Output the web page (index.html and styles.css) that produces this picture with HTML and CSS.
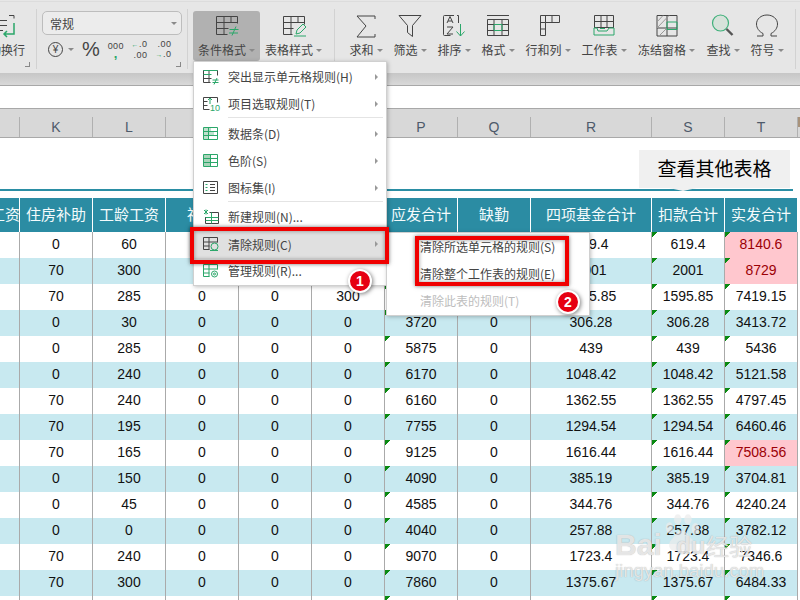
FILE: index.html
```html
<!DOCTYPE html>
<html lang="zh">
<head>
<meta charset="utf-8">
<title>条件格式</title>
<link rel="stylesheet" href="styles.css">
</head>
<body>
<div class="page">
  <header class="ribbon">
    <section class="group group-wrap">
      <div class="rbtn wrapbtn">
        <svg class="ico" viewBox="0 0 24 24"><path class="k" d="M-4 6.500H6M-4 11.500H6M-4 16.500H2"/><path class="k" d="M8 1.500h5v3"/><path class="g2" d="M13 9v11H3M6 17l-3 3 3 3"/></svg>
        <span class="lbl">自动换行</span>
      </div>
      <i class="launcher"></i>
    </section>
    <section class="group group-num">
      <div class="combo"><span>常规</span><i class="tri"></i></div>
      <div class="numrow">
        <span class="yen">¥</span><i class="tri yentri"></i>
        <span class="pct">%</span>
        <span class="thou">000<b>,</b></span>
        <span class="dec"><em><u>←</u>.0</em><em>.00</em></span>
        <span class="dec"><em>.00</em><em><u>→</u>.0</em></span>
      </div>
      <i class="launcher"></i>
    </section>
    <section class="group group-style">
      <div class="rbtn wide active">
        <svg class="ico" viewBox="0 0 24 24"><path class="k" d="M1.500 2.500h21v7M1.500 2.500v18h11M1.500 8.500h21M1.500 14.500h12M9 2.500v18M16 2.500v6"/><path class="g" d="M14.500 15.500h9M14 19h9M21 12.500l-4 9"/></svg>
        <span class="lbl">条件格式<i class="tri"></i></span>
      </div>
      <div class="rbtn wide">
        <svg class="ico" viewBox="0 0 24 24"><path class="k" d="M1.500 2.500h21v8M1.500 2.500v18h9M1.500 8.500h21M1.500 14.500h10M9 2.500v18M16 2.500v6"/><path class="g" d="M12 22h12M14 20l1-4 6-6 3 3-6 6z"/></svg>
        <span class="lbl">表格样式<i class="tri"></i></span>
      </div>
    </section>
    <section class="group group-tools">
      <div class="rbtn">
        <svg class="ico" viewBox="0 0 24 24"><path class="k" d="M21 5V2H3l9 10-9 11h18v-3"/></svg>
        <span class="lbl">求和<i class="tri"></i></span>
      </div>
      <div class="rbtn">
        <svg class="ico" viewBox="0 0 24 24"><path class="k" d="M1 1.500h22l-8.500 10v11l-5-4v-7z"/></svg>
        <span class="lbl">筛选<i class="tri"></i></span>
      </div>
      <div class="rbtn">
        <svg class="ico" viewBox="0 0 24 24"><path class="k" d="M12 1.500H2.500a1 1 0 0 0-1 1v18a1 1 0 0 0 1 1h6M15 1.500h1.500V9"/><path class="k" d="M5 9l3-6.500 3 6.500M6 7h4M5 13h6l-6 7h6"/><path class="g" d="M18.500 10v12M14.500 17.500l4 4.500 4-4.500"/></svg>
        <span class="lbl">排序<i class="tri"></i></span>
      </div>
      <div class="rbtn">
        <svg class="ico" viewBox="0 0 24 24"><path class="k" d="M1 1.500h22M1.500 5.500h21v16h-21zM1.500 10.500h21M1.500 16.500h21M8 5.500v16M16 5.500v16"/><path class="g" d="M8 10.500h8v6H8z"/></svg>
        <span class="lbl">格式<i class="tri"></i></span>
      </div>
      <div class="rbtn rbtn3">
        <svg class="ico" viewBox="0 0 24 24"><path class="k" d="M4.500 1.500h19v7h-14v13h-5zM4.500 8.500h5M4.500 15h5M9.500 1.500v7M16 1.500v7"/></svg>
        <span class="lbl">行和列<i class="tri"></i></span>
      </div>
      <div class="rbtn rbtn3">
        <svg class="ico" viewBox="0 0 24 24"><path class="k" d="M2.500 14V1.500h19V14M2.500 7.500h19M2.500 13.500h19M9 1.500v12M15 1.500v12"/><path class="g" d="M2 14v7h20v-7h-5l-2 3H6l-1-3zM8 14.500h5"/></svg>
        <span class="lbl">工作表<i class="tri"></i></span>
      </div>
      <div class="rbtn wide4">
        <svg class="ico" viewBox="0 0 24 24"><path class="k" d="M2 1.500h20v20.500H2zM2 14h20M12 1.500V22"/><path class="lt" d="M2 8l6-6.500M2 14L14 1.500M4 22l8-8"/><path class="g" d="M12 8h10v7.500H12z"/></svg>
        <span class="lbl">冻结窗格<i class="tri"></i></span>
      </div>
      <div class="rbtn">
        <svg class="ico" viewBox="0 0 24 24"><circle class="lens" cx="9.500" cy="9" r="8"/><path class="hand" d="M15.500 15l6 6"/></svg>
        <span class="lbl">查找<i class="tri"></i></span>
      </div>
      <div class="rbtn">
        <svg class="ico" viewBox="0 0 24 24"><path class="k" d="M2 22h6v-2.500C4 17.500 1.500 14 1.500 10 1.500 5 6 1 12 1s10.500 4 10.500 9c0 4-2.500 7.500-6.500 9.500V22h6"/></svg>
        <span class="lbl">符号<i class="tri"></i></span>
      </div>
    </section>
  </header>

  <div class="ribbon-shadow"></div>
  <div class="fbar"></div>

  <div class="colhead">
    <span></span><span>K</span><span>L</span><span>M</span><span>N</span><span>O</span><span>P</span><span>Q</span><span>R</span><span>S</span><span>T</span><span class="next"></span>
  </div>

  <div class="titlebar">
    <div class="others">查看其他表格</div>
  </div>

  <table class="sheet">
    <colgroup>
      <col class="c-j"><col class="c-n"><col class="c-n"><col class="c-n"><col class="c-n"><col class="c-n"><col class="c-n"><col class="c-n"><col class="c-r"><col class="c-n"><col class="c-n">
    </colgroup>
    <thead>
      <tr><th class="clip">工资</th><th>住房补助</th><th>工龄工资</th><th>福利</th><th></th><th></th><th>应发合计</th><th>缺勤</th><th>四项基金合计</th><th>扣款合计</th><th>实发合计</th></tr>
    </thead>
    <tbody>
      <tr><td></td><td>0</td><td>60</td><td></td><td></td><td></td><td class="tk"></td><td></td><td>619.4</td><td class="tk">619.4</td><td class="tk hot">8140.6</td></tr>
      <tr><td></td><td>70</td><td>300</td><td></td><td></td><td></td><td class="tk"></td><td></td><td>2001</td><td class="tk">2001</td><td class="tk hot">8729</td></tr>
      <tr><td></td><td>70</td><td>285</td><td>0</td><td>0</td><td>300</td><td class="tk"></td><td></td><td>1595.85</td><td class="tk">1595.85</td><td class="tk">7419.15</td></tr>
      <tr><td></td><td>0</td><td>30</td><td>0</td><td>0</td><td>0</td><td class="tk">3720</td><td>0</td><td>306.28</td><td class="tk">306.28</td><td class="tk">3413.72</td></tr>
      <tr><td></td><td>0</td><td>285</td><td>0</td><td>0</td><td>0</td><td class="tk">5875</td><td>0</td><td>439</td><td class="tk">439</td><td class="tk">5436</td></tr>
      <tr><td></td><td>0</td><td>240</td><td>0</td><td>0</td><td>0</td><td class="tk">6170</td><td>0</td><td>1048.42</td><td class="tk">1048.42</td><td class="tk">5121.58</td></tr>
      <tr><td></td><td>70</td><td>240</td><td>0</td><td>0</td><td>0</td><td class="tk">6160</td><td>0</td><td>1362.55</td><td class="tk">1362.55</td><td class="tk">4797.45</td></tr>
      <tr><td></td><td>70</td><td>195</td><td>0</td><td>0</td><td>0</td><td class="tk">7755</td><td>0</td><td>1294.54</td><td class="tk">1294.54</td><td class="tk">6460.46</td></tr>
      <tr><td></td><td>70</td><td>165</td><td>0</td><td>0</td><td>0</td><td class="tk">9125</td><td>0</td><td>1616.44</td><td class="tk">1616.44</td><td class="tk hot">7508.56</td></tr>
      <tr><td></td><td>0</td><td>150</td><td>0</td><td>0</td><td>0</td><td class="tk">4090</td><td>0</td><td>385.19</td><td class="tk">385.19</td><td class="tk">3704.81</td></tr>
      <tr><td></td><td>0</td><td>45</td><td>0</td><td>0</td><td>0</td><td class="tk">4585</td><td>0</td><td>344.76</td><td class="tk">344.76</td><td class="tk">4240.24</td></tr>
      <tr><td></td><td>0</td><td>0</td><td>0</td><td>0</td><td>0</td><td class="tk">4040</td><td>0</td><td>257.88</td><td class="tk">257.88</td><td class="tk">3782.12</td></tr>
      <tr><td></td><td>70</td><td>240</td><td>0</td><td>0</td><td>0</td><td class="tk">9070</td><td>0</td><td>1723.4</td><td class="tk">1723.4</td><td class="tk">7346.6</td></tr>
      <tr><td></td><td>70</td><td>300</td><td>0</td><td>0</td><td>0</td><td class="tk">7860</td><td>0</td><td>1375.67</td><td class="tk">1375.67</td><td class="tk">6484.33</td></tr>
      <tr><td></td><td></td><td></td><td></td><td></td><td></td><td class="tk"></td><td></td><td></td><td class="tk"></td><td class="tk"></td></tr>
    </tbody>
  </table>

  <nav class="menu">
    <div class="mi"><svg class="mico" viewBox="0 0 16 16"><path class="k" d="M.5 1.500h14v5M.5 1.500v12h7M.5 9.500h8M6 1.500v12"/><path class="g" d="M9.500 11h6M9.500 13.500h6M14 9l-3 6.500" /><path class="g" d="M.5 1.500h14M.5 5.500h8"/></svg><span>突出显示单元格规则(H)</span><i class="more"></i></div>
    <div class="mi"><svg class="mico" viewBox="0 0 16 16"><path class="k" d="M.5 1.500h14v5M.5 1.500v12h6M.5 5.500h4M.5 9.500h4"/><path class="g" d="M7 8V2M5 4l2-2 2 2"/><text class="ten" x="7" y="15">10</text></svg><span>项目选取规则(T)</span><i class="more"></i></div>
    <div class="msep"></div>
    <div class="mi"><svg class="mico" viewBox="0 0 16 16"><path class="fill" d="M1 2h7v3H1zM1 6h10v3H1zM1 10h5v3H1z"/><path class="g" d="M.5 1.500h14v12H.5zM.5 5.500h14M.5 9.500h14M5.500 1.500v12"/></svg><span>数据条(D)</span><i class="more"></i></div>
    <div class="mi"><svg class="mico" viewBox="0 0 16 16"><path class="fill2" d="M1 2h6v11H1z"/><path class="g" d="M.5 1.500h14v12H.5zM.5 5.500h14M.5 9.500h14M7.500 1.500v12"/></svg><span>色阶(S)</span><i class="more"></i></div>
    <div class="mi"><svg class="mico" viewBox="0 0 16 16"><path class="k" d="M.5 1.500h14v12H.5zM7 4.500h5M7 7.500h5M7 10.500h5"/><path class="g" d="M2.500 4.500h2M2.500 7.500h2M2.500 10.500h2"/></svg><span>图标集(I)</span><i class="more"></i></div>
    <div class="msep msep2"></div>
    <div class="mi"><svg class="mico" viewBox="0 0 16 16"><path class="k" d="M6.500 3.500h9v11h-13V8"/><path class="g" d="M2.500 8.500h13M2.500 11.500h13M8.500 3.500v11M1 1l4 4M5 1L1 5M3 .5v5"/></svg><span>新建规则(N)...</span></div>
    <div class="mi hl"><svg class="mico" viewBox="0 0 16 16"><path class="k" d="M.5 1.500h14v5M.5 1.500v12h6M.5 6h14M.5 10h6M6 1.500v12"/><circle class="g" cx="11.500" cy="10.500" r="3.500"/><path class="g" d="M7 14.500h8"/></svg><span>清除规则(C)</span><i class="more"></i></div>
    <div class="mi"><svg class="mico" viewBox="0 0 16 16"><path class="g" d="M.5 1.500h14v5M.5 1.500v12h6M.5 6h14M.5 10h6M6 1.500v12"/><circle class="g" cx="11.500" cy="11" r="3"/><circle class="g" cx="11.500" cy="11" r="1"/></svg><span>管理规则(R)...</span></div>
  </nav>

  <nav class="submenu">
    <div class="si">清除所选单元格的规则(S)</div>
    <div class="si">清除整个工作表的规则(E)</div>
    <div class="si off">清除此表的规则(T)</div>
  </nav>

  <div class="mark mark-a"></div>
  <div class="mark mark-b"></div>
  <div class="badge badge-a">1</div>
  <div class="badge badge-b">2</div>

  <div class="wm">
    <span class="wm-bai">Bai</span>
    <svg class="wm-paw" viewBox="0 0 40 46"><ellipse cx="7" cy="14" rx="4" ry="6"/><ellipse cx="16" cy="5" rx="4" ry="5.500"/><ellipse cx="27" cy="5" rx="4" ry="5.500"/><ellipse cx="35" cy="15" rx="4" ry="6"/><path d="M20 17c-6 0-7 7-11 10-4 4-3 12 4 12 3 0 5-1 8-1s5 1 8 1c7 0 7-8 3-12-4-3-6-10-12-10z"/></svg>
    <span class="wm-du">du</span>
    <span class="wm-jy">经验</span>
    <span class="wm-url">jingyan.baidu.com</span>
  </div>
</div>
</body>
</html>
```
FILE: styles.css
```css
* { box-sizing: border-box; }
html, body { margin: 0; padding: 0; background: #fff; }
.page {
  position: relative;
  width: 800px;
  height: 600px;
  overflow: hidden;
  font-family: "Noto Sans CJK SC", "Liberation Sans", sans-serif;
}

/* ribbon */
.ribbon {
  display: flex;
  height: 73px;
  background: #e6e6e6;
  border-top: 1px solid #e6e6e6;
  box-shadow: inset 0 4px 0 -3px #dcdcdc;
  padding-top: 3px;
  color: #444;
}
.group {
  position: relative;
  display: flex;
  height: 60px;
  margin-top: 5px;
  border-right: 1px solid #d2d2d2;
}
.group-wrap { width: 37px; overflow: hidden; }
.group-num { width: 151px; flex-direction: column; padding: 2px 0 0 5px; }
.group-style { width: 147px; padding-left: 5px; }
.group-tools { width: 461px; padding-left: 9px; }

.rbtn {
  display: flex;
  flex-direction: column;
  align-items: center;
  width: 44px;
  height: 50px;
  margin-top: 2px;
  padding-top: 3px;
  border-radius: 3px;
}
.rbtn3 { width: 56px; }
.wide4 { width: 69px; }
.wide { width: 67px; }
.active { background: #b1b1b1; }
.ico { display: block; flex: none; width: 24px; height: 24px; overflow: visible; }
.lbl {
  display: flex;
  align-items: center;
  margin-top: 4px;
  font-size: 12px;
  line-height: 16px;
  white-space: nowrap;
}
.wrapbtn { width: 36px; align-items: flex-end; padding-right: 11px; }
.wrapbtn .lbl { justify-content: flex-end; }
.tri {
  display: inline-block;
  width: 0;
  height: 0;
  margin-left: 3px;
  border-left: 3px solid transparent;
  border-right: 3px solid transparent;
  border-top: 3px solid #8a8a8a;
}
.launcher {
  position: absolute;
  right: 6px;
  bottom: 2px;
  width: 5px;
  height: 5px;
  border-right: 1px solid #888;
  border-bottom: 1px solid #888;
}

/* svg stroke classes */
svg path, svg circle, svg ellipse { fill: none; }
.k { stroke: #444; stroke-width: 1; }
.g { stroke: #2ba76a; stroke-width: 1; }
.g2 { stroke: #2ba76a; stroke-width: 1.5; }
.lt { stroke: #999; stroke-width: 1; }
svg .fill { fill: #bfe0cd; stroke: none; }
svg .fill2 { fill: #a9d3b9; stroke: none; }
svg .lens { fill: #d6e2da; stroke: #3fb07a; stroke-width: 1.2; }
.hand { stroke: #555; stroke-width: 2.4; }
.ten { font: 9px "Liberation Sans", sans-serif; fill: #2ba76a; }

/* number group */
.combo {
  display: flex;
  align-items: center;
  justify-content: space-between;
  width: 140px;
  height: 24px;
  padding: 0 4px 0 7px;
  border: 1px solid #bdbdbd;
  border-radius: 5px;
  background: #ececec;
  font-size: 12px;
}
.numrow {
  display: flex;
  align-items: center;
  height: 24px;
  margin-top: 2px;
  padding-left: 6px;
}
.yen {
  display: flex;
  align-items: center;
  justify-content: center;
  flex: none;
  width: 15px;
  height: 15px;
  border: 1px solid #444;
  border-radius: 50%;
  font: 10px "Liberation Sans", sans-serif;
}
.yentri { margin-left: 5px; }
.pct { margin-left: 8px; font: 20px/24px "Liberation Sans", sans-serif; }
.thou {
  display: flex;
  flex-direction: column;
  align-items: center;
  margin-left: 8px;
  font: 9px/10px "Liberation Sans", sans-serif;
  letter-spacing: .3px;
}
.thou b { color: #2ba76a; font-size: 13px; line-height: 6px; }
.dec {
  display: flex;
  flex-direction: column;
  align-items: flex-end;
  flex: none;
  width: 15px;
  margin-left: 9px;
  font: 9px/10px "Liberation Sans", sans-serif;
  letter-spacing: .6px;
}
.dec em { font-style: normal; }
.dec u { color: #2ba76a; text-decoration: none; font-size: 7px; }

/* below ribbon */
.ribbon-shadow {
  height: 12px;
  background: linear-gradient(#c6c6c6, #d9d9d9);
}
.fbar {
  height: 24px;
  background: #fff;
  border-top: 1px solid #a8a8a8;
  border-bottom: 1px solid #a8a8a8;
}
.colhead {
  display: grid;
  grid-template-columns: 20px repeat(7, 73px) 121px 73px 73px 2px;
  height: 29px;
  padding-top: 8px;
  background: #d8d8d8;
  border-bottom: 1px solid #a9a9a9;
  font: 14px/20px "Liberation Sans", sans-serif;
  color: #4e5a6a;
  text-align: center;
}
.colhead span { border-right: 1px solid #b0b0b0; }
.colhead .next { height: 10px; border-right: 0; background: #a8927a; }
.titlebar {
  display: flex;
  justify-content: flex-end;
  align-items: flex-end;
  height: 53px;
  margin-right: 7px;
  padding-right: 3px;
  border-bottom: 2px solid #2a8ea4;
}
.others {
  position: relative;
  width: 151px;
  height: 38px;
  margin-bottom: 1px;
  background: #f0f0f0;
  color: #000;
  font-size: 19px;
  line-height: 36px;
  text-align: center;
}
.others::after {
  content: "";
  position: absolute;
  left: 30px;
  bottom: -3px;
  border-left: 14px solid transparent;
  border-right: 14px solid transparent;
  border-top: 3px solid #f0f0f0;
}

/* sheet */
.sheet {
  width: 798px;
  margin-top: 7px;
  table-layout: fixed;
  border-collapse: separate;
  border-spacing: 0;
}
.c-j { width: 20px; }
.c-n { width: 73px; }
.c-r { width: 121px; }
.sheet th {
  height: 34px;
  padding: 0 0 3px;
  background: #2b8ca3;
  border-right: 1px solid #fff;
  color: #f4fbfc;
  font-size: 15px;
  font-weight: 400;
  white-space: nowrap;
  overflow: hidden;
}
.sheet th.clip { direction: rtl; text-align: left; }
.sheet td {
  height: 26px;
  padding: 0 0 3px;
  border-right: 1px solid #aaa;
  background-color: #fff;
  color: #111;
  font: 14px/16px "Liberation Sans", sans-serif;
  text-align: center;
}
.sheet tbody tr:nth-child(even) td { background-color: #c8e9f0; }
.sheet td.tk {
  background-image: linear-gradient(135deg, #0a8a12 0 4px, transparent 4px);
  background-size: 7px 7px;
  background-repeat: no-repeat;
}
.sheet tbody tr td.hot { background-color: #ffc7ce; color: #9c0006; }

/* menus */
.menu, .submenu {
  position: absolute;
  background: #fff;
  border: 1px solid #d0d0d0;
  box-shadow: 1px 1px 4px rgba(0, 0, 0, .25);
  color: #444;
  font-size: 12px;
}
.menu { left: 193px; top: 61px; width: 194px; height: 225px; padding-top: 1px; }
.mi {
  position: relative;
  display: flex;
  align-items: center;
  height: 27px;
  padding-left: 9px;
}
.mico { flex: none; width: 16px; height: 16px; margin-right: 9px; overflow: visible; }
.more {
  position: absolute;
  right: 8px;
  top: 11px;
  border-top: 3px solid transparent;
  border-bottom: 3px solid transparent;
  border-left: 3px solid #999;
}
.msep { height: 3px; margin-left: 34px; margin-right: 3px; border-top: 1px solid #e4e4e4; }
.msep2 { height: 2px; }
.hl { height: 28px; margin: 0 0 -1px -3px; padding-left: 12px; background: #e0e0e0; box-shadow: 0 0 4px rgba(0, 0, 0, .35); }
.submenu { left: 386px; top: 232px; width: 204px; height: 84px; padding: 0 0 0 33px; }
.si { height: 27px; line-height: 27px; white-space: nowrap; }
.off { color: #bdbdbd; }

.mark {
  position: absolute;
  border: 4px solid #f00000;
  box-shadow: 0 0 4px rgba(0, 0, 0, .55), inset 0 0 4px rgba(0, 0, 0, .4);
}
.mark-a { left: 190px; top: 227px; width: 199px; height: 37px; }
.mark-b { left: 415px; top: 236px; width: 154px; height: 50px; }

.badge {
  position: absolute;
  width: 24px;
  height: 24px;
  border: 2px solid #fff;
  border-radius: 50%;
  background: #e60012;
  box-shadow: 1px 1px 4px rgba(0, 0, 0, .5);
  color: #fff;
  font: 700 14px/20px "Liberation Sans", sans-serif;
  text-align: center;
}
.badge-a { left: 348px; top: 269px; }
.badge-b { left: 556px; top: 290px; }

/* watermark */
.wm {
  position: absolute;
  left: 0;
  top: 0;
  width: 800px;
  height: 600px;
  color: rgba(240, 240, 240, .85);
  text-shadow: 0 0 1px rgba(110, 110, 110, .55);
  pointer-events: none;
}
.wm span { position: absolute; white-space: nowrap; }
.wm-bai { left: 615px; top: 528px; font: 700 30px/34px "Liberation Sans", sans-serif; }
.wm-du { left: 676px; top: 532px; font: 700 24px/28px "Liberation Sans", sans-serif; }
.wm-jy { left: 706px; top: 529px; font-size: 23px; line-height: 32px; }
.wm-url { left: 615px; top: 560px; font: 18.500px/22px "Liberation Sans", sans-serif; }
.wm-paw { position: absolute; left: 663px; top: 514px; width: 37px; height: 44px; }
.wm-paw ellipse, .wm-paw path { fill: rgba(235, 235, 235, .7); }
```
